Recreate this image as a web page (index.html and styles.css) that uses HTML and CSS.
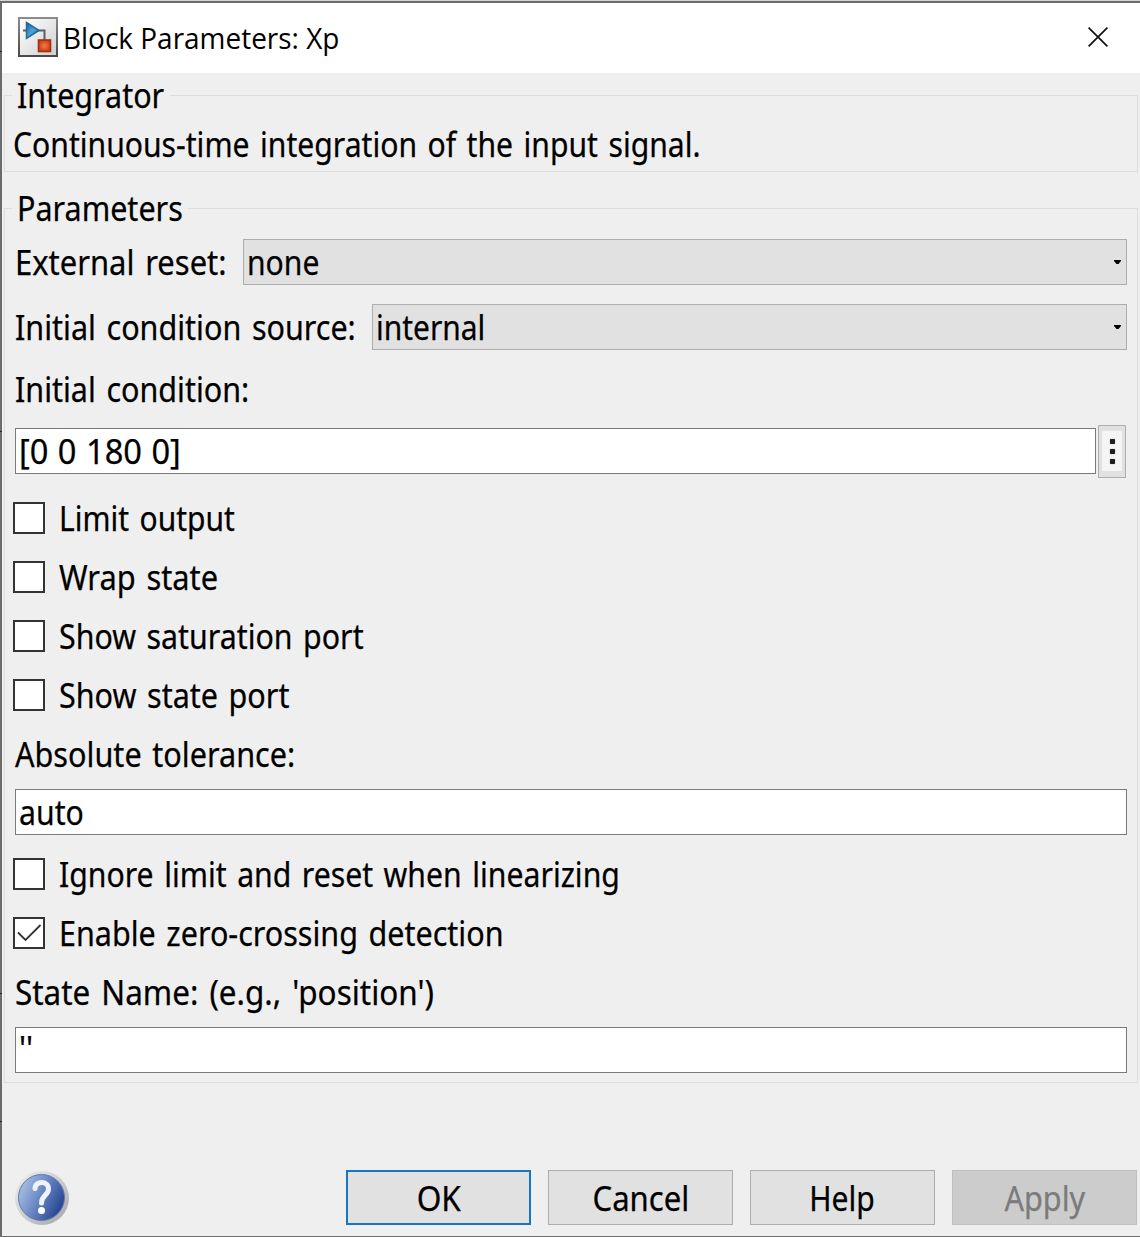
FILE: index.html
```
<!DOCTYPE html>
<html lang="en">
<head>
<meta charset="utf-8">
<title>Block Parameters: Xp</title>
<link rel="stylesheet" href="styles.css">
</head>
<body>
<main class="dialog">
  <header class="titlebar">
    <svg class="app-icon" width="40" height="40" viewBox="0 0 40 40">
      <defs>
        <linearGradient id="frame" x1="0" y1="0" x2="0" y2="1"><stop offset="0" stop-color="#8d8d8d"/><stop offset="1" stop-color="#484848"/></linearGradient>
        <linearGradient id="panel" x1="0" y1="0" x2="1" y2="1"><stop offset="0" stop-color="#ffffff"/><stop offset="1" stop-color="#cfd0d2"/></linearGradient>
        <linearGradient id="tri" x1="0" y1="0" x2="1" y2="1"><stop offset="0" stop-color="#1f5f95"/><stop offset=".5" stop-color="#4ba3d8"/><stop offset="1" stop-color="#17639c"/></linearGradient>
        <radialGradient id="sq"><stop offset="0" stop-color="#f47a4c"/><stop offset="1" stop-color="#d33f13"/></radialGradient>
      </defs>
      <rect width="40" height="40" fill="url(#frame)"/>
      <rect x="2" y="2" width="36" height="36" fill="url(#panel)"/>
      <path d="M5 13.500H9M20 13.500H26.500V23" fill="none" stroke="#5b6065" stroke-width="2"/>
      <path d="M8.500 5.500L21 13.500L8.500 21.500Z" fill="url(#tri)" stroke="#24699c" stroke-width="1.500"/>
      <rect x="20.500" y="23" width="12" height="11.500" fill="url(#sq)" stroke="#9c3212" stroke-width="1.600"/>
    </svg>
    <h1 class="title"><span class="t t-title">Block Parameters: Xp</span></h1>
    <svg class="close" width="20" height="20" viewBox="0 0 20 20"><path d="M.6.6L19.4 19.4M19.4.6L.6 19.4" stroke="#111" stroke-width="1.7"/></svg>
  </header>

  <section class="group group-about">
    <h2 class="legend"><span class="t t-integrator">Integrator</span></h2>
    <p class="description"><span class="t t-desc">Continuous-time integration of the input signal.</span></p>
  </section>

  <section class="group group-params">
    <h2 class="legend"><span class="t t-params">Parameters</span></h2>
    <div class="row row-reset">
      <span class="label"><span class="t t-reset">External reset:</span></span>
      <div class="select"><span class="t t-none">none</span><svg width="7" height="4" viewBox="0 0 7 4"><path d="M0 0H7V1L4.5 4H2.5L0 1Z"/></svg></div>
    </div>
    <div class="row row-source">
      <span class="label"><span class="t t-source">Initial condition source:</span></span>
      <div class="select"><span class="t t-internal">internal</span><svg width="7" height="4" viewBox="0 0 7 4"><path d="M0 0H7V1L4.5 4H2.5L0 1Z"/></svg></div>
    </div>
    <div class="label label-ic"><span class="t t-ic">Initial condition:</span></div>
    <div class="row row-ic">
      <div class="input"><span class="t t-vec">[0 0 180 0]</span></div>
      <div class="more"><span class="more-face"><i></i><i></i><i></i></span></div>
    </div>
    <div class="stack">
      <div class="check"><span class="box"></span><span class="t t-limit">Limit output</span></div>
      <div class="check"><span class="box"></span><span class="t t-wrap">Wrap state</span></div>
      <div class="check"><span class="box"></span><span class="t t-sat">Show saturation port</span></div>
      <div class="check"><span class="box"></span><span class="t t-port">Show state port</span></div>
      <div class="label"><span class="t t-tol">Absolute tolerance:</span></div>
    </div>
    <div class="input input-tol"><span class="t t-auto">auto</span></div>
    <div class="stack">
      <div class="check"><span class="box"></span><span class="t t-ignore">Ignore limit and reset when linearizing</span></div>
      <div class="check"><span class="box"><svg width="28" height="28" viewBox="0 0 28 28"><path d="M3 13.500L10.500 21L25.500 6" fill="none" stroke="#333" stroke-width="1.800"/></svg></span><span class="t t-zero">Enable zero-crossing detection</span></div>
      <div class="label"><span class="t t-name">State Name: (e.g., 'position')</span></div>
    </div>
    <div class="input input-name"><span class="t t-quotes">''</span></div>
  </section>

  <footer class="footer">
    <svg class="help-icon" width="56" height="56" viewBox="0 0 56 56">
      <defs>
        <linearGradient id="ring" x1="0" y1="0" x2="1" y2="1"><stop offset="0" stop-color="#f0f0f0"/><stop offset=".5" stop-color="#cdcdd0"/><stop offset="1" stop-color="#a2a2a2"/></linearGradient>
        <linearGradient id="ball" x1=".1" y1=".3" x2=".9" y2=".7"><stop offset="0" stop-color="#9db5de"/><stop offset=".5" stop-color="#6482c0"/><stop offset="1" stop-color="#2c4a94"/></linearGradient>
      </defs>
      <circle cx="28" cy="28" r="27" fill="url(#ring)"/>
      <circle cx="27.500" cy="27.500" r="23" fill="url(#ball)" stroke="#5f78b0" stroke-width="1"/>
      <path d="M21 18.500C21 10.500 34.500 10.500 34.500 19C34.500 25.500 27.500 25 27.500 33" fill="none" stroke="#eef2fa" stroke-width="5" stroke-linecap="round"/>
      <circle cx="27.500" cy="40.500" r="3.500" fill="#fff"/>
    </svg>
    <div class="buttons">
      <div class="button primary"><span class="t t-ok">OK</span></div>
      <div class="button"><span class="t t-cancel">Cancel</span></div>
      <div class="button"><span class="t t-help">Help</span></div>
      <div class="button disabled"><span class="t t-apply">Apply</span></div>
    </div>
  </footer>
</main>
</body>
</html>
```
FILE: styles.css
```
* { box-sizing: border-box; }
html, body { margin: 0; }
body {
  width: 1140px;
  height: 1237px;
  overflow: hidden;
  background: #efefef;
  color: #000;
  font: 34px/46px "Noto Sans", sans-serif;
}
h1, h2, p { margin: 0; font: inherit; }
svg { display: block; flex: none; }

/* Narrowed text: --s is the horizontal scale of each string */
.t {
  display: inline-block;
  white-space: pre;
  word-spacing: 3px;
  -webkit-text-stroke: .25px currentColor;
  transform: scaleX(var(--s, .897));
  transform-origin: 0 50%;
}
.t-title { --s: .964; word-spacing: 0; -webkit-text-stroke: 0; }
.t-integrator { --s: .896; }
.t-desc { --s: .886; }
.t-reset { --s: .91; }
.t-none { --s: .885; }
.t-internal { --s: .88; }
.t-ic { --s: .896; }
.t-tol { --s: .9; }
.t-vec { --s: .96; word-spacing: 1px; }
.t-limit { --s: .882; }
.t-wrap { --s: .906; }
.t-sat { --s: .892; }
.t-auto { --s: .889; }
.t-ignore { --s: .888; }
.t-name { --s: .925; }
.t-quotes { --s: .92; transform: translateY(-2px) scaleX(var(--s)); }
.button .t { transform-origin: 50% 50%; }
.t-ok { --s: .93; }
.t-cancel { --s: .915; }
.t-help { --s: .885; }
.t-apply { --s: .9; }

.dialog {
  display: flex;
  flex-direction: column;
  height: 1237px;
  padding-left: 2px;
  border-top: 1px solid #d2d2d2;
  border-bottom: 1px solid #6c6c6c;
  background:
    linear-gradient(#222, #222) 0 50px / 2px 1px no-repeat,
    linear-gradient(#222, #222) 0 430px / 2px 1px no-repeat,
    linear-gradient(#222, #222) 0 992px / 2px 1px no-repeat,
    linear-gradient(#222, #222) 0 1120px / 2px 1px no-repeat,
    linear-gradient(#6b6b6b, #6b6b6b) 0 0 / 2px 100% no-repeat,
    #efefef;
}
.titlebar {
  display: flex;
  align-items: center;
  height: 72px;
  flex: none;
  padding: 0 32px 2px 16px;
  border-top: 2px solid #6c6c6c;
  background: #fff;
}
.title { margin: 1px 0 0 5px; font: 29px/46px "Open Sans", sans-serif; }
.close { margin-left: auto; }

.group {
  flex: none;
  margin: 0 2px 0 2px;
  border: 1px solid #dcdcdc;
}
.group-about { height: 77px; margin-top: 22px; }
.group-params { height: 875px; margin-top: 36px; padding-right: 10px; }
.legend {
  width: 158px;
  height: 40px;
  margin: -21px 0 0 7px;
  padding-left: 5px;
  background: #efefef;
  line-height: 40px;
}
.group-params .legend { width: 176px; }
.description { margin: 6px 0 0 8px; }

.row { display: flex; align-items: center; }
.label { margin-left: 10px; }
.select {
  display: flex;
  flex: none;
  align-items: center;
  justify-content: space-between;
  height: 46px;
  padding: 0 5px 0 3px;
  border: 1px solid #adadad;
  background: #e1e1e1;
}
.row .label { min-width: 0; }
.row-reset { margin-top: 11px; justify-content: space-between; }
.row-reset .select { width: 884px; }
.row-source { margin-top: 19px; justify-content: space-between; }
.row-source .select { width: 755px; }
.label-ic { margin-top: 16px; }
.row-ic { margin-top: 13px; gap: 2px; padding-right: 1px; }
.input {
  display: flex;
  align-items: center;
  height: 46px;
  margin-left: 10px;
  padding: 0 3px 1px;
  border: 1px solid #7a7a7a;
  background: #fff;
}
.row-ic .input { flex: 1; margin-bottom: 1px; }
.more {
  display: flex;
  width: 28px;
  height: 53px;
  padding: 5px 3px 6px;
  border: 1px solid #adadad;
  background: #e1e1e1;
}
.more-face {
  display: flex;
  flex: 1;
  flex-direction: column;
  align-items: center;
  justify-content: center;
  gap: 5px;
  background: #f5f5f5;
}
.more-face i { width: 5px; height: 5px; border-radius: 1px; background: #1e1e1e; box-shadow: 0 0 1px #555; }

.stack { display: flex; flex-direction: column; gap: 27px; margin-top: 24px; }
.stack .label { height: 32px; line-height: 32px; }
.check { display: flex; align-items: center; gap: 14px; height: 32px; margin-left: 8px; }
.box { width: 32px; height: 32px; flex: none; border: 2px solid #333; background: #fff; }
.input-tol, .input-name { margin-top: 19px; }
.input-tol + .stack { margin-top: 23px; }

.footer {
  display: flex;
  justify-content: space-between;
  margin-top: 87px;
  padding: 0 3px 0 12px;
}
.buttons { display: flex; gap: 17px; }
.button {
  display: flex;
  align-items: center;
  justify-content: center;
  width: 185px;
  height: 55px;
  border: 1px solid #adadad;
  background: #e1e1e1;
}
.button.primary { border: 2px solid #1477c4; }
.button.disabled { border-color: #bfbfbf; background: #ccc; color: #7b7b7b; }
```
